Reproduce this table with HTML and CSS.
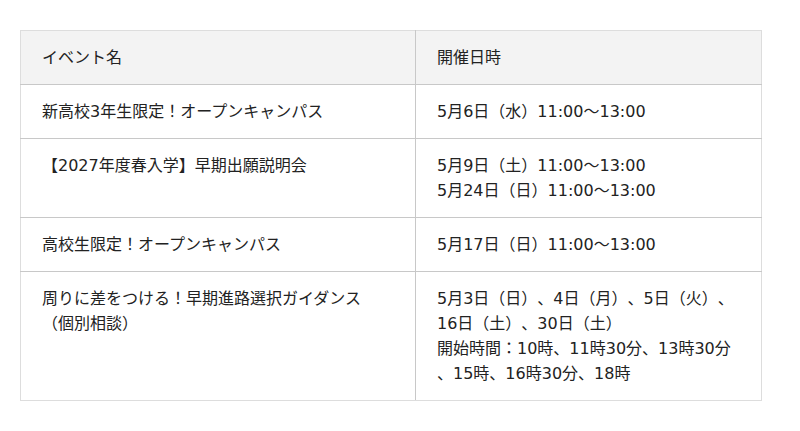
FILE: index.html
```html
<!DOCTYPE html>
<html lang="ja">
<head>
<meta charset="utf-8">
<title>イベント</title>
<link rel="stylesheet" href="styles.css">
</head>
<body>
<div class="page">
  <table class="events">
    <thead>
      <tr><th class="col-name">イベント名</th><th class="col-date">開催日時</th></tr>
    </thead>
    <tbody>
      <tr><td>新高校3年生限定！オープンキャンパス</td><td>5月6日（水）11:00〜13:00</td></tr>
      <tr><td>【2027年度春入学】早期出願説明会</td><td>5月9日（土）11:00〜13:00<br>5月24日（日）11:00〜13:00</td></tr>
      <tr><td>高校生限定！オープンキャンパス</td><td>5月17日（日）11:00〜13:00</td></tr>
      <tr><td>周りに差をつける！早期進路選択ガイダンス<br>（個別相談）</td><td>5月3日（日）、4日（月）、5日（火）、<br>16日（土）、30日（土）<br>開始時間：10時、11時30分、13時30分<br>、15時、16時30分、18時</td></tr>
    </tbody>
  </table>
</div>
</body>
</html>
```
FILE: styles.css
```css
html, body {
  margin: 0;
  padding: 0;
  background: #ffffff;
}
.page {
  padding: 30px 20px;
}
.events {
  width: 742px;
  border-collapse: collapse;
  font-family: "DejaVu Sans", "Noto Sans CJK JP", sans-serif;
  font-size: 16px;
  line-height: 25px;
  color: #222222;
  table-layout: fixed;
  text-spacing-trim: space-all;
}
.events th,
.events td {
  border: 1px solid #c8c8c8;
  padding: 14px 21px;
  text-align: left;
  vertical-align: top;
  font-weight: normal;
  white-space: nowrap;
}
.events th {
  background: #f3f3f3;
  border-top-color: #dddddd;
}
.events tr > :first-child {
  border-left-color: #dddddd;
}
.events tr > :last-child {
  border-right-color: #dddddd;
}
.events tbody tr:last-child > td {
  border-bottom-color: #dddddd;
}
.col-name {
  width: 352px;
}
```
